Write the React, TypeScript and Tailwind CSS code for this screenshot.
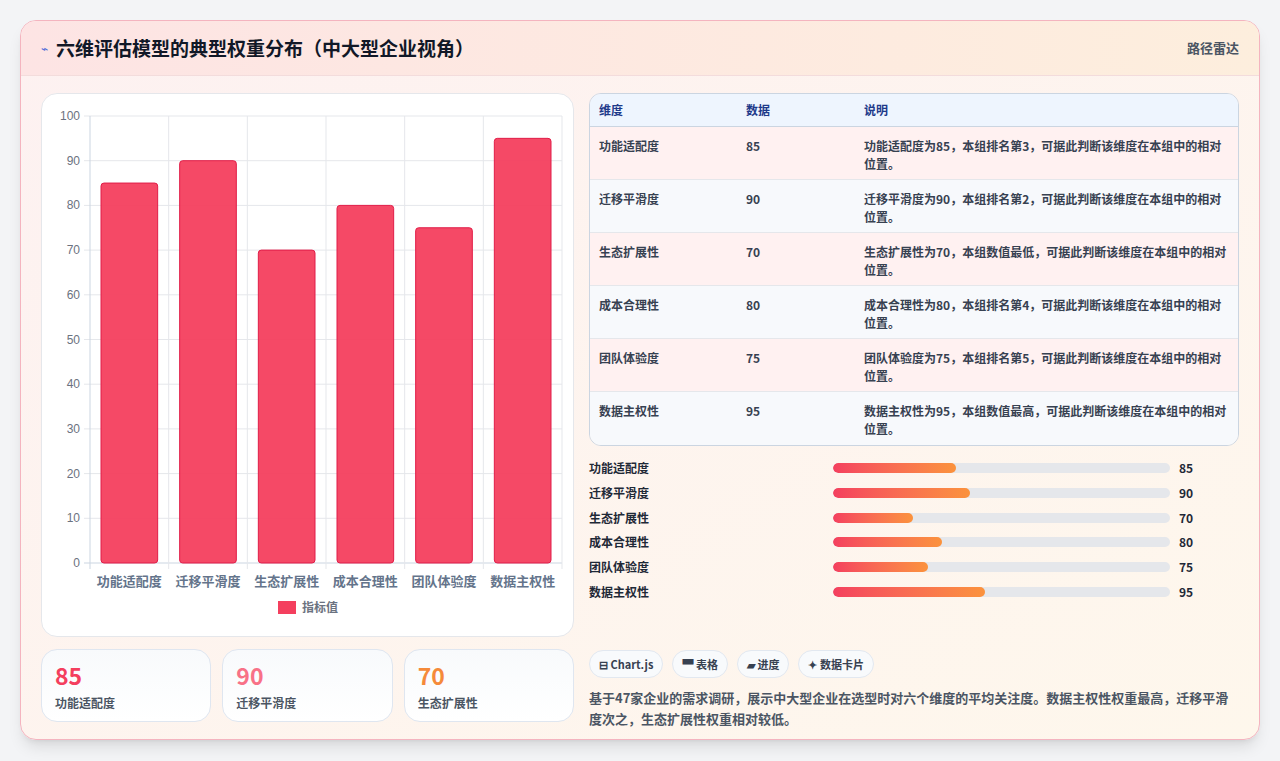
import React from "react";

const data = [
  { n: "功能适配度", v: 85, d: "功能适配度为85，本组排名第3，可据此判断该维度在本组中的相对位置。" },
  { n: "迁移平滑度", v: 90, d: "迁移平滑度为90，本组排名第2，可据此判断该维度在本组中的相对位置。" },
  { n: "生态扩展性", v: 70, d: "生态扩展性为70，本组数值最低，可据此判断该维度在本组中的相对位置。" },
  { n: "成本合理性", v: 80, d: "成本合理性为80，本组排名第4，可据此判断该维度在本组中的相对位置。" },
  { n: "团队体验度", v: 75, d: "团队体验度为75，本组排名第5，可据此判断该维度在本组中的相对位置。" },
  { n: "数据主权性", v: 95, d: "数据主权性为95，本组数值最高，可据此判断该维度在本组中的相对位置。" },
];

function Chart() {
  const L = 48, T = 22, W = 472, H = 447;
  const cw = W / 6;
  return (
    <svg width="532" height="542" className="block">
      {Array.from({ length: 11 }).map((_, i) => {
        const y = T + H - (i * H) / 10;
        return (
          <g key={i}>
            <line x1={L - 6} x2={L + W} y1={y} y2={y} stroke={i === 0 ? "#cbd5e1" : "#e5e7eb"} />
            <text x={L - 10} y={y + 4} textAnchor="end" fontSize="12" fill="#6b7280" fontFamily="Liberation Sans, sans-serif">{i * 10}</text>
          </g>
        );
      })}
      {Array.from({ length: 7 }).map((_, i) => (
        <line key={i} x1={L + i * cw} x2={L + i * cw} y1={T} y2={T + H + 6} stroke={i === 0 ? "#cbd5e1" : "#e5e7eb"} />
      ))}
      {data.map((d, i) => {
        const h = (d.v * H) / 100;
        const x = L + i * cw + 11;
        return (
          <g key={i}>
            <rect x={x} y={T + H - h} width={cw - 22} height={h} rx="3" fill="#f43f5e" fillOpacity="0.95" stroke="#e11d48" strokeWidth="1" />
            <text x={L + i * cw + cw / 2} y={T + H + 23} textAnchor="middle" fontSize="13" fontWeight="bold" fill="#64748b" fontFamily="Noto Sans CJK SC, sans-serif">{d.n}</text>
          </g>
        );
      })}
      <rect x="236" y="507" width="18" height="13" fill="#f43f5e" />
      <text x="260" y="518" fontSize="12" fontWeight="bold" fill="#6b7280" fontFamily="Noto Sans CJK SC, sans-serif">指标值</text>
    </svg>
  );
}

export default function App() {
  return (
    <div className="w-[1280px] h-[761px] bg-[#f3f4f6] p-5 pb-0" style={{ fontFamily: "'Noto Sans CJK SC', 'Noto Sans', sans-serif" }}>
      <div className="h-[720px] rounded-2xl border border-[#f4b4bf] bg-gradient-to-br from-[#fdf1f1] to-[#fef7ec] overflow-hidden shadow-lg">
        <div className="h-[55px] flex items-center justify-between px-5 bg-gradient-to-r from-[#fde4e4] to-[#fdeedd] border-b border-[#f3dcdc]">
          <div className="flex items-center gap-2">
            <span className="text-[12px] text-[#4f6bd8]">⌁</span>
            <span className="text-[19px] font-bold text-[#111827]">六维评估模型的典型权重分布（中大型企业视角）</span>
          </div>
          <span className="text-[13px] font-bold text-[#4b5563]">路径雷达</span>
        </div>
        <div className="flex gap-[15px] px-5 pt-[17px]">
          <div className="w-[533px] flex flex-col gap-[12px]">
            <div className="h-[544px] rounded-2xl bg-white border border-[#e5e7eb]">
              <Chart />
            </div>
            <div className="flex gap-[11px]">
              {[["85", "#f43f5e"], ["90", "#f87187"], ["70", "#f58a3a"]].map(([v, c], i) => (
                <div key={i} className="flex-1 h-[73px] rounded-2xl border border-[#dfe6f0] bg-gradient-to-b from-[#f8fafc] to-white px-[13px] pt-[10px]">
                  <div className="text-[23px] font-bold leading-[30px]" style={{ color: c }}>{v}</div>
                  <div className="text-[12px] font-semibold text-[#4b5563] mt-[4px]">{data[i].n}</div>
                </div>
              ))}
            </div>
          </div>
          <div className="flex-1 flex flex-col">
            <div className="rounded-xl border border-[#cbd5e1] overflow-hidden text-[12px] font-semibold text-[#374151]">
              <div className="flex h-[33px] items-center bg-[#eef5fe] text-[#1e3a8a] border-b border-[#cbd5e1]">
                <div className="w-[156px] pl-[9px]">维度</div>
                <div className="w-[118px]">数据</div>
                <div className="flex-1">说明</div>
              </div>
              {data.map((d, i) => (
                <div key={i} className={`flex h-[53px] items-start pt-[10px] ${i % 2 === 0 ? "bg-[#fff1f1]" : "bg-[#f7f9fc]"} ${i < 5 ? "border-b border-[#e5e7eb]" : ""}`}>
                  <div className="w-[156px] pl-[9px]">{d.n}</div>
                  <div className="w-[118px]">{d.v}</div>
                  <div className="flex-1 pr-[8px] leading-[18px]">{d.d}</div>
                </div>
              ))}
            </div>
            <div className="flex flex-col gap-[6.8px] mt-[13px]">
              {data.map((d, i) => (
                <div key={i} className="flex items-center h-[18px] text-[12px] font-semibold text-[#1f2937]">
                  <div className="w-[244px]">{d.n}</div>
                  <div className="w-[337px] h-[10px] rounded-full bg-[#e5e7eb] overflow-hidden">
                    <div className="h-full rounded-full bg-gradient-to-r from-[#f43f5e] to-[#fb923c]" style={{ width: `${(d.v - 42) * 337 / 100 * 0.85 + 0}px` }} />
                  </div>
                  <div className="ml-[9px] font-bold">{d.v}</div>
                </div>
              ))}
            </div>
            <div className="flex gap-[9px] mt-[49px]">
              {["⊟ Chart.js", "▀ 表格", "▰ 进度", "✦ 数据卡片"].map((t) => (
                <div key={t} className="h-[28px] px-[9px] rounded-full border border-[#e2e8f0] bg-[#f8fafc] flex items-center text-[11px] font-bold text-[#374151]">{t}</div>
              ))}
            </div>
            <p className="mt-[9px] text-[13px] font-semibold leading-[21px] text-[#4b5563]">基于47家企业的需求调研，展示中大型企业在选型时对六个维度的平均关注度。数据主权性权重最高，迁移平滑度次之，生态扩展性权重相对较低。</p>
          </div>
        </div>
      </div>
    </div>
  );
}
